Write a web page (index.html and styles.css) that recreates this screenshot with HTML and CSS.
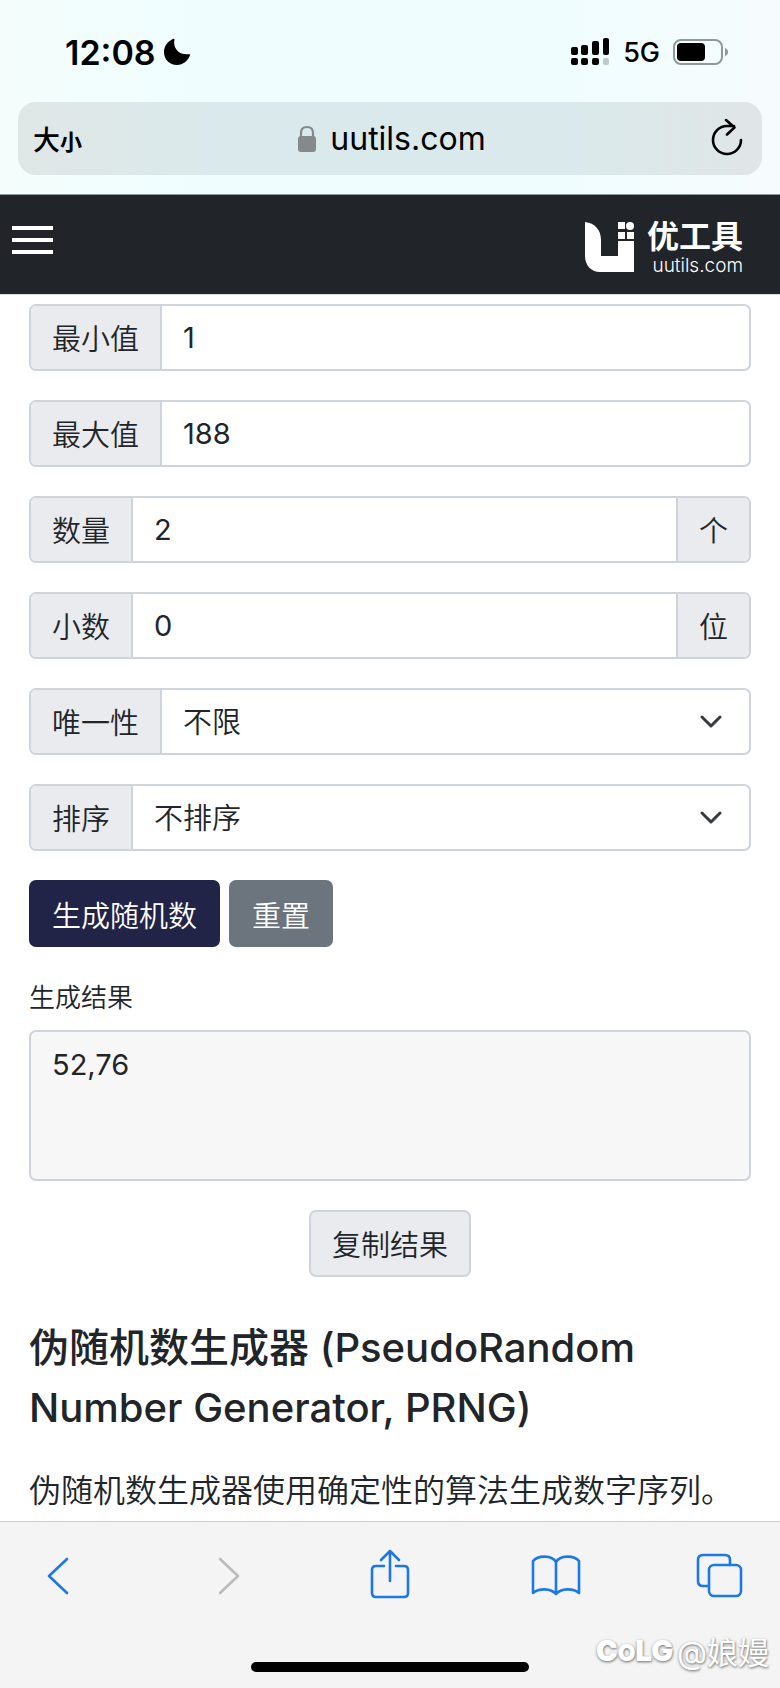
FILE: index.html
```html
<!DOCTYPE html>
<html lang="zh-CN">
<head>
<meta charset="utf-8">
<meta name="viewport" content="width=device-width, initial-scale=1">
<title>优工具 - 随机数生成器</title>
<link rel="stylesheet" href="styles.css">
</head>
<body>
<div class="browser-top">
  <div class="status">
    <div class="status-side">
      <span class="time">12:08</span>
      <svg class="moon" width="28" height="28" viewBox="0 0 28 28" aria-hidden="true"><path d="M11.500 1.200C9.600 10 15.500 17.500 26.500 16.200C27 16.200 27.300 16.600 27.100 17.100C25 23 20 27 14 27C6.500 27 1 21.500 1 14C1 8 5 3 10.400.8C11.100.5 11.600.7 11.500 1.200Z"/></svg>
    </div>
    <div class="status-side status-right">
      <svg width="40" height="28" viewBox="0 0 40 28" aria-hidden="true">
        <rect x="1" y="9" width="7" height="8" rx="2"/><rect x="11" y="7" width="7" height="10" rx="2"/><rect x="22" y="3" width="7" height="14" rx="2"/><rect x="33" y="0" width="6" height="17" rx="2"/>
        <rect x="1" y="20" width="7" height="7" rx="2"/><rect x="11" y="20" width="7" height="7" rx="2"/><rect x="22" y="20" width="7" height="7" rx="2"/><rect x="33" y="20" width="6" height="7" rx="2" fill="#bccaca"/>
      </svg>
      <span class="network">5G</span>
      <svg width="56" height="28" viewBox="0 0 56 28" aria-hidden="true"><rect x="1" y="2" width="48" height="24" rx="7" fill="none" stroke="#8f9999" stroke-width="2"/><rect x="4" y="5" width="28" height="18" rx="4"/><path d="M52 10Q55 11 55 14T52 18Z" fill="#8f9999"/></svg>
    </div>
  </div>
  <div class="address">
    <button class="text-size" type="button">大<span class="small">小</span></button>
    <a class="site" href="#top">
      <svg width="20" height="28" viewBox="0 0 20 28" aria-hidden="true"><path d="M4 12V8Q4 2 10 2T16 8V12" fill="none" stroke="#85898b" stroke-width="2.200"/><rect x="1" y="11" width="18" height="16" rx="3" fill="#85898b"/></svg>
      <span>uutils.com</span>
    </a>
    <button class="reload" type="button" aria-label="刷新"><svg width="34" height="40" viewBox="0 0 34 40" aria-hidden="true"><path d="M31 21A14 14 0 1 1 17 7H24M16 1L24.500 8.500L17 15.500" fill="none" stroke="#000" stroke-width="2.600" stroke-linecap="round" stroke-linejoin="round"/></svg></button>
  </div>
</div>
<header class="site-header" id="top">
  <button class="menu" type="button" aria-label="菜单"><span></span><span></span><span></span></button>
  <a class="brand" href="#top">
    <svg width="50" height="50" viewBox="0 0 50 50" aria-hidden="true"><path fill="#fff" d="M0 0C10 1 16 8 16 18V34H33V19H49V50H15C6 50 0 43 0 34ZM33 0H40V7H33ZM33 10H40V17H33ZM42 10H49V17H42Z"/><circle cx="45" cy="4" r="4" fill="#fff"/></svg>
    <span class="brand-words"><span class="brand-name">优工具</span><span class="brand-url">uutils.com</span></span>
  </a>
</header>
<main class="content">
  <form class="generator">
    <div class="group"><label class="tag" for="min">最小值</label><input class="field" id="min" type="text" inputmode="numeric" value="1"></div>
    <div class="group"><label class="tag" for="max">最大值</label><input class="field" id="max" type="text" inputmode="numeric" value="188"></div>
    <div class="group"><label class="tag" for="count">数量</label><input class="field" id="count" type="text" inputmode="numeric" value="2"><span class="tag unit">个</span></div>
    <div class="group"><label class="tag" for="decimals">小数</label><input class="field" id="decimals" type="text" inputmode="numeric" value="0"><span class="tag unit">位</span></div>
    <div class="group"><label class="tag" for="unique">唯一性</label><div class="select"><select class="field" id="unique"><option>不限</option></select><svg class="arrow" width="24" height="14" viewBox="0 0 24 14" aria-hidden="true"><path d="M3 2L12 11L21 2"/></svg></div></div>
    <div class="group"><label class="tag" for="sort">排序</label><div class="select"><select class="field" id="sort"><option>不排序</option></select><svg class="arrow" width="24" height="14" viewBox="0 0 24 14" aria-hidden="true"><path d="M3 2L12 11L21 2"/></svg></div></div>
    <div class="actions"><button class="btn primary" type="button">生成随机数</button><button class="btn secondary" type="button">重置</button></div>
  </form>
  <div class="result">
    <label class="result-label" for="result">生成结果</label>
    <textarea class="result-box" id="result" readonly>52,76</textarea>
    <button class="btn copy" type="button">复制结果</button>
  </div>
  <article>
    <h2 class="title">伪随机数生成器 (PseudoRandom Number Generator, PRNG)</h2>
    <p class="text">伪随机数生成器使用确定性的算法生成数字序列。</p>
  </article>
</main>
<footer class="browser-bottom">
  <nav class="tools" aria-label="浏览器工具栏">
    <button class="tool" type="button" aria-label="后退"><svg width="56" height="56" viewBox="0 0 56 56"><path d="M37 11L19 28L37 45" stroke-width="3"/></svg></button>
    <button class="tool off" type="button" aria-label="前进" disabled><svg width="56" height="56" viewBox="0 0 56 56"><path d="M24 11L42 28L24 45" stroke-width="3"/></svg></button>
    <button class="tool" type="button" aria-label="分享"><svg width="56" height="56" viewBox="0 0 56 56"><path d="M23 18H15Q11 18 11 22V45Q11 49 15 49H43Q47 49 47 45V22Q47 18 43 18H35M29 33V3M20 12L29 3L38 12"/></svg></button>
    <button class="tool" type="button" aria-label="书签"><svg width="56" height="56" viewBox="0 0 56 56"><path d="M29 14C25 7 11 7 6 13V45C12 40 24 40 29 46C34 40 46 40 52 45V13C47 7 33 7 29 14V46"/></svg></button>
    <button class="tool" type="button" aria-label="标签页"><svg width="56" height="56" viewBox="0 0 56 56"><path d="M16 38H11Q6 38 6 33V12Q6 7 11 7H33Q38 7 38 12V17"/><rect x="17" y="17" width="32" height="31" rx="5"/></svg></button>
  </nav>
  <div class="home"></div>
  <div class="watermark"><span class="mark">C<span class="low">O</span>LG</span><span>@娘嫚</span></div>
</footer>
</body>
</html>
```

FILE: styles.css
```css
* { box-sizing: border-box; }
body {
  margin: 0;
  min-height: 100vh;
  display: flex;
  flex-direction: column;
  background: #fff;
  color: #212529;
  font-family: Inter, "Noto Sans CJK SC", sans-serif;
  font-size: 29px;
}
button, input, select, textarea { font: inherit; color: inherit; margin: 0; }
button { border: 0; padding: 0; background: none; }
a { color: inherit; text-decoration: none; }
svg { display: block; flex: none; }

.browser-top {
  padding-bottom: 19px;
  background: linear-gradient(90deg, #f4fdfc, #effdff 30%, #effdff 70%, #f6fbfc);
  border-bottom: 1px solid #8f999b;
  color: #000;
}
.status {
  height: 102px;
  padding: 2px 51px 0 65px;
  display: flex;
  justify-content: space-between;
  align-items: center;
}
.status-side { display: flex; align-items: center; gap: 7px; }
.status-right { gap: 13px; }
.time { font-size: 34px; font-weight: 600; }
.network { font-size: 27px; font-weight: 500; }
.address {
  margin: 0 18px;
  padding: 0 18px 0 15px;
  height: 73px;
  border-radius: 18px;
  background: linear-gradient(90deg, #e0e6e6, #dae9eb 25%, #dae9eb 75%, #e0e5e6);
  display: grid;
  grid-template-columns: 1fr auto 1fr;
  align-items: center;
}
.text-size { justify-self: start; font-size: 27px; font-weight: 500; }
.small { font-size: 22px; font-weight: 700; }
.site { display: flex; align-items: center; gap: 13px; padding-left: 6px; font-size: 32px; }
.reload { justify-self: end; }

.site-header {
  height: 100px;
  padding: 4px 37px 0 12px;
  background: #212529;
  border-bottom: 1px solid #dcdfe1;
  color: #fff;
  display: flex;
  justify-content: space-between;
  align-items: center;
}
.menu { display: grid; gap: 8px; width: 41px; margin-bottom: 14px; }
.menu span { height: 4px; background: #fff; }
.brand { display: flex; align-items: center; gap: 12px; }
.brand-words { display: grid; justify-items: end; }
.brand-name { font-size: 32px; line-height: 38px; font-weight: 700; }
.brand-url { font-size: 19px; line-height: 20px; font-weight: 350; }

.content { flex: 1; padding: 9px 29px 0; }
.generator { display: grid; gap: 29px; }
.group {
  display: flex;
  height: 67px;
  border: 2px solid #ced4da;
  border-radius: 7px;
  overflow: hidden;
}
.tag {
  display: flex;
  align-items: center;
  padding: 0 21px 2px;
  background: #e9ebee;
  border-right: 2px solid #ced4da;
  font-weight: 350;
}
.unit { border-right: 0; border-left: 2px solid #ced4da; }
.field {
  flex: 1;
  min-width: 0;
  width: 100%;
  height: 100%;
  padding: 0 21px;
  border: 0;
  background: transparent;
  font-size: 29px;
  appearance: none;
}
.select { flex: 1; display: grid; align-items: center; }
.select > * { grid-area: 1 / 1; }
.select .field { padding-top: 2px; font-weight: 350; }
.arrow { justify-self: end; margin-right: 26px; pointer-events: none; }
.arrow path { fill: none; stroke: #343a40; stroke-width: 3; stroke-linecap: round; stroke-linejoin: round; }
.actions { display: flex; gap: 9px; }
.btn { height: 67px; padding: 0 23px; border-radius: 7px; font-weight: 350; }
.primary { background: #212347; color: #fff; }
.secondary { background: #6c757d; color: #fff; }

.result { display: grid; }
.result-label { margin-top: 32px; font-size: 26px; line-height: 38px; font-weight: 350; }
.result-box {
  height: 151px;
  margin: 13px 0 29px;
  padding: 12px 21px;
  border: 2px solid #ced4da;
  border-radius: 7px;
  background: #f7f7f8;
  font-size: 29px;
  line-height: 42px;
  resize: none;
}
.copy { justify-self: center; border: 2px solid #ced4da; padding: 0 21px 2px; background: #e9ebee; }
.title { margin: 41px 0 0; font-size: 40px; line-height: 60px; font-weight: 500; }
.text { margin: 29px 0 0; font-size: 32px; line-height: 48px; font-weight: 350; }

.browser-bottom {
  position: relative;
  height: 167px;
  padding-top: 26px;
  border-top: 1px solid #ccced0;
  background: #f4f4f5;
}
.tools { display: flex; justify-content: space-between; padding: 0 32px 0 30px; }
.tool { color: #1b78e4; }
.tool path, .tool rect { fill: none; stroke: currentColor; stroke-width: 2.600; stroke-linecap: round; stroke-linejoin: round; }
.off { color: #bbb; }
.home { width: 278px; height: 10px; margin: 58px auto 0; border-radius: 5px; background: #000; }
.watermark {
  position: absolute;
  right: 11px;
  bottom: 15px;
  display: flex;
  align-items: center;
  gap: 4px;
  color: #fff;
  font-size: 31px;
  text-shadow: 0 1px 3px #888, 1px 1px 2px #aaa;
}
.mark { font-size: 29px; font-weight: 900; }
.low { font-size: 23px; }
```
